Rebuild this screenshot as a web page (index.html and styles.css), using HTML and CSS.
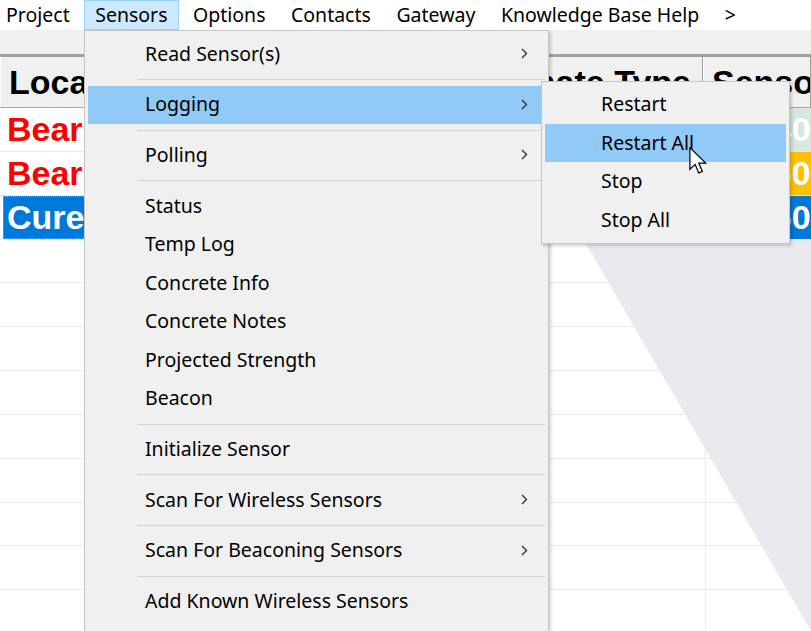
FILE: index.html
```html
<!DOCTYPE html>
<html>
<head>
<meta charset="utf-8">
<link rel="stylesheet" href="styles.css">
</head>
<body>
<div class="app">
  <svg class="watermark" width="811" height="631" viewBox="0 0 811 631">
    <polygon points="507,108 811,108 811,631" fill="#e9e9ef"/>
  </svg>

  <nav class="menubar">
    <span class="mb-item first">Project</span>
    <span class="mb-item active">Sensors</span>
    <span class="mb-item">Options</span>
    <span class="mb-item">Contacts</span>
    <span class="mb-item">Gateway</span>
    <span class="mb-item">Knowledge Base Help</span>
    <span class="mb-item">&gt;</span>
  </nav>
  <div class="toolstrip"></div>

  <div class="grid">
    <div class="row head">
      <div class="cell c1">Location</div>
      <div class="cell c2">Estimate Type</div>
      <div class="cell c3">Sensor ID</div>
    </div>
    <div class="row">
      <div class="cell c1 red">Bearing Wall</div>
      <div class="cell c2"></div>
      <div class="cell c3 teal">12340</div>
    </div>
    <div class="row">
      <div class="cell c1 red">Bearing Pad</div>
      <div class="cell c2"></div>
      <div class="cell c3 amber">12350</div>
    </div>
    <div class="row">
      <div class="cell c1 sel">Cure Box</div>
      <div class="cell c2"></div>
      <div class="cell c3 blue">12360</div>
    </div>
    <div class="row"><div class="cell c1"></div><div class="cell c2"></div><div class="cell c3"></div></div>
    <div class="row"><div class="cell c1"></div><div class="cell c2"></div><div class="cell c3"></div></div>
    <div class="row"><div class="cell c1"></div><div class="cell c2"></div><div class="cell c3"></div></div>
    <div class="row"><div class="cell c1"></div><div class="cell c2"></div><div class="cell c3"></div></div>
    <div class="row"><div class="cell c1"></div><div class="cell c2"></div><div class="cell c3"></div></div>
    <div class="row"><div class="cell c1"></div><div class="cell c2"></div><div class="cell c3"></div></div>
    <div class="row"><div class="cell c1"></div><div class="cell c2"></div><div class="cell c3"></div></div>
    <div class="row"><div class="cell c1"></div><div class="cell c2"></div><div class="cell c3"></div></div>
    <div class="row"><div class="cell c1"></div><div class="cell c2"></div><div class="cell c3"></div></div>
  </div>

  <div class="menu sensors-menu">
    <div class="mi">Read Sensor(s)<svg class="chev" width="7" height="11" viewBox="0 0 7 11"><polyline points="1,1 5.5,5.5 1,10" fill="none" stroke="#333" stroke-width="1.4"/></svg></div>
    <div class="sep"></div>
    <div class="mi hl">Logging<svg class="chev" width="7" height="11" viewBox="0 0 7 11"><polyline points="1,1 5.5,5.5 1,10" fill="none" stroke="#333" stroke-width="1.4"/></svg></div>
    <div class="sep"></div>
    <div class="mi">Polling<svg class="chev" width="7" height="11" viewBox="0 0 7 11"><polyline points="1,1 5.5,5.5 1,10" fill="none" stroke="#333" stroke-width="1.4"/></svg></div>
    <div class="sep"></div>
    <div class="mi">Status</div>
    <div class="mi">Temp Log</div>
    <div class="mi">Concrete Info</div>
    <div class="mi">Concrete Notes</div>
    <div class="mi">Projected Strength</div>
    <div class="mi">Beacon</div>
    <div class="sep"></div>
    <div class="mi">Initialize Sensor</div>
    <div class="sep"></div>
    <div class="mi">Scan For Wireless Sensors<svg class="chev" width="7" height="11" viewBox="0 0 7 11"><polyline points="1,1 5.5,5.5 1,10" fill="none" stroke="#333" stroke-width="1.4"/></svg></div>
    <div class="sep"></div>
    <div class="mi">Scan For Beaconing Sensors<svg class="chev" width="7" height="11" viewBox="0 0 7 11"><polyline points="1,1 5.5,5.5 1,10" fill="none" stroke="#333" stroke-width="1.4"/></svg></div>
    <div class="sep"></div>
    <div class="mi">Add Known Wireless Sensors</div>
  </div>

  <div class="menu submenu">
    <div class="mi sub">Restart</div>
    <div class="mi sub hl">Restart All</div>
    <div class="mi sub">Stop</div>
    <div class="mi sub">Stop All</div>
  </div>

  <svg class="cursor" width="18" height="27" viewBox="0 0 13 20">
    <path d="M0.5,0.5 L0.5,16.5 L4.4,12.9 L7.1,19.2 L9.7,18.1 L7.1,11.9 L12.2,11.9 Z" fill="#fff" stroke="#000" stroke-width="0.9" stroke-linejoin="miter"/>
  </svg>
</div>
</body>
</html>
```

FILE: styles.css
```css
body {
  margin: 0;
  width: 811px;
  height: 631px;
  overflow: hidden;
  font-family: "Noto Sans", "Open Sans", sans-serif;
}

.app {
  position: relative;
  width: 811px;
  height: 631px;
  background: #ffffff;
  overflow: hidden;
}

.watermark {
  position: absolute;
  left: 0;
  top: 0;
  z-index: 0;
}

/* menu bar */
.menubar {
  position: relative;
  z-index: 2;
  height: 30px;
  background: #ffffff;
  display: flex;
  align-items: stretch;
  font-size: 19.5px;
  color: #000;
}

.mb-item {
  display: flex;
  align-items: center;
  padding: 0 10.5px 2px 10.5px;
  margin-right: 2.5px;
  border: 1px solid transparent;
  box-sizing: border-box;
  white-space: nowrap;
}

.mb-item.first {
  padding-left: 6px;
  border-left: 0;
}

.mb-item.active {
  background: #cce8ff;
  border-color: #99d1ff;
}

.toolstrip {
  position: relative;
  z-index: 2;
  height: 24px;
  background: #f0f0f0;
}

/* grid */
.grid {
  position: relative;
  z-index: 1;
  border-top: 3px solid #a0a0a0;
}

.row {
  display: grid;
  grid-template-columns: 451px 252px 108px;
  height: 43.85px;
  box-sizing: border-box;
  border-bottom: 1px solid #e9e9e9;
  padding-left: 3px;
}

.row.head {
  height: 51px;
  background: #f0f0f0;
  border-bottom: 1px solid #a8a8a8;
  padding-left: 0;
  grid-template-columns: 454px 249px 108px;
}

.cell {
  display: flex;
  align-items: center;
  font-family: "Liberation Sans", Arial, sans-serif;
  font-weight: bold;
  font-size: 34px;
  padding-left: 4px;
  white-space: nowrap;
  overflow: hidden;
  box-sizing: border-box;
  color: #000;
}

.head .cell {
  border-left: 1px solid #ffffff;
  border-right: 1px solid #a0a0a0;
  padding-left: 8px;
  color: #000;
}

.row .c2 {
  border-right: 1px solid #ebebeb;
}

.head .c2 {
  border-right: 1px solid #a0a0a0;
}

.red {
  color: #ff0000;
}

.sel {
  background: #0078d7;
  color: #ffffff;
  border: 1px dotted #e39a3b;
  padding-left: 3px;
}

.row .c3 {
  padding-left: 10px;
  color: #ffffff;
}

.row.head .c3 {
  padding-left: 8px;
  color: #000;
}

.teal {
  background: #d5e7df;
}

.amber {
  background: #ffc000;
}

.blue {
  background: #0078d7;
}

/* popup menus */
.menu {
  position: absolute;
  z-index: 5;
  background: #f0f0f0;
  border: 1px solid #c6c6c6;
  box-shadow: 2px 2px 3px rgba(0, 0, 0, 0.18);
  box-sizing: border-box;
  font-size: 19.5px;
  color: #000;
}

.sensors-menu {
  left: 84px;
  top: 30px;
  width: 465px;
  height: 620px;
  padding: 4px 3px 0 3px;
}

.mi {
  position: relative;
  height: 38.5px;
  display: flex;
  align-items: center;
  padding-left: 57px;
  padding-bottom: 2px;
  box-sizing: border-box;
  white-space: nowrap;
}

.mi.hl {
  background: #91c9f7;
}

.chev {
  position: absolute;
  right: 17px;
  top: 13px;
}

.sep {
  height: 12.2px;
  margin-left: 49px;
  display: flex;
  align-items: center;
}

.sep::before {
  content: "";
  flex: 1;
  height: 1px;
  background: #d2d2d2;
}

.submenu {
  left: 541px;
  top: 81px;
  width: 249px;
  height: 163px;
  padding: 3px;
}

.mi.sub {
  height: 38.7px;
  padding-left: 56px;
}

.cursor {
  position: absolute;
  left: 689px;
  top: 147px;
  z-index: 9;
}
```
